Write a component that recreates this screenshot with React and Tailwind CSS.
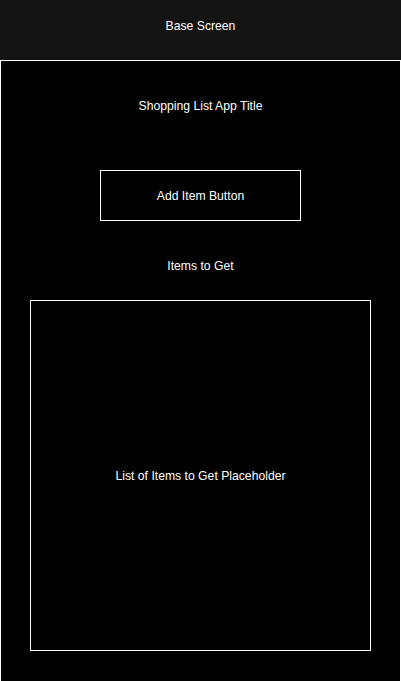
export default function App() {
  return (
    <div className="h-[681px] w-[401px] overflow-hidden bg-black font-['Liberation_Sans',Arial,sans-serif] text-[12.2px] text-white">
      {/* Header */}
      <div className="flex h-[60px] items-start justify-center bg-[#141414] pt-[18px] leading-[17px]">
        Base Screen
      </div>

      {/* Screen body */}
      <div className="flex h-[640px] flex-col items-center border border-white bg-black pt-[37px]">
        <p className="leading-[17px]">Shopping List App Title</p>

        <button className="mt-[55px] flex h-[51px] w-[201px] items-center justify-center border border-white pt-[2px] leading-[17px]">
          Add Item Button
        </button>

        <p className="mt-[37px] leading-[17px]">Items to Get</p>

        <div className="mt-[25px] flex h-[351px] w-[341px] items-center justify-center border border-white pt-[2px]">
          List of Items to Get Placeholder
        </div>
      </div>
    </div>
  )
}
